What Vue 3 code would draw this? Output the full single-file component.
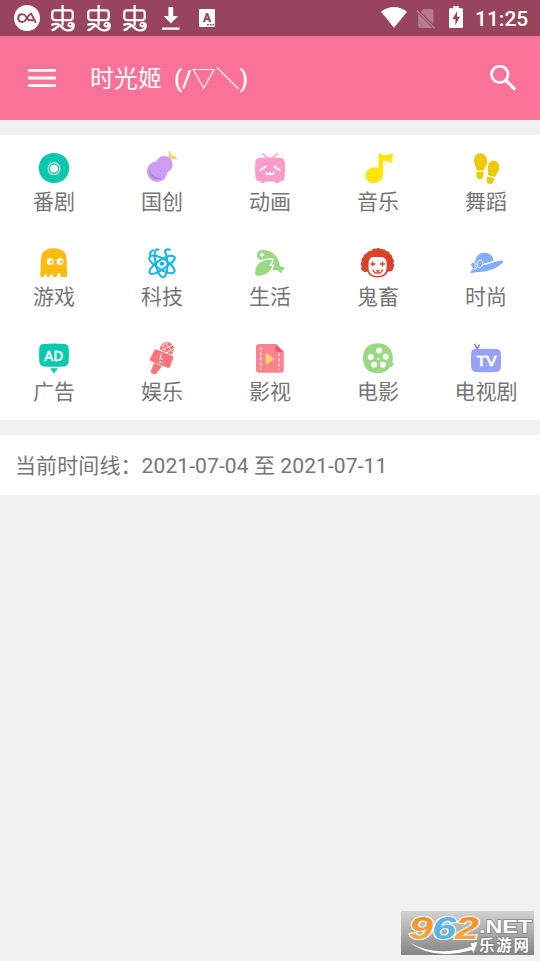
<script setup>
const categories = [
  { id: 'bangumi', label: '番剧' },
  { id: 'guochuang', label: '国创' },
  { id: 'anime', label: '动画' },
  { id: 'music', label: '音乐' },
  { id: 'dance', label: '舞蹈' },
  { id: 'game', label: '游戏' },
  { id: 'tech', label: '科技' },
  { id: 'life', label: '生活' },
  { id: 'kichiku', label: '鬼畜' },
  { id: 'fashion', label: '时尚' },
  { id: 'ad', label: '广告' },
  { id: 'ent', label: '娱乐' },
  { id: 'cinema', label: '影视' },
  { id: 'movie', label: '电影' },
  { id: 'tv', label: '电视剧' },
]
</script>

<template>
  <div class="screen">
    <div class="status">
      <svg class="st-logo" viewBox="0 0 26 26">
        <circle cx="13" cy="13" r="13" fill="#fff" />
        <path d="M21.5 17.2 17.2 8.6C15.5 9.2 13.5 12 11.8 14.7C9.6 18.4 4.2 17.4 4.2 13.1C4.2 8.7 9.5 7.8 12 11.5L14.7 15.2H20" fill="none" stroke="#97445c" stroke-width="1.9" stroke-linejoin="round" stroke-linecap="round" />
      </svg>
      <svg v-for="n in 3" :key="n" class="st-bug" viewBox="0 0 26 28">
        <g fill="none" stroke="#fff" stroke-width="2.3" stroke-linecap="round" stroke-linejoin="round">
          <rect x="2.3" y="6.3" width="20.4" height="9.8" rx="2.5" />
          <path d="M12.6 2V20.8M2.3 20.6C7 19.2 9 19.7 12 23.2C15 27.7 23.7 27.7 23.7 21.6C23.7 17.6 18.2 18.2 18.6 21.4M2.4 26C5 26 5.5 23.5 8.2 22.4" />
        </g>
        <circle cx="20.8" cy="21" r="2.6" fill="#fff" />
        <circle cx="20.2" cy="20.5" r=".9" fill="#97445c" />
      </svg>
      <svg class="st-down" viewBox="0 0 18 24" fill="#fff">
        <path d="M6.4 0h4.8v9h5L8.8 16.6 1.6 9h4.8zM0 20.5h17.6v2.3H0z" />
      </svg>
      <svg class="st-app" viewBox="0 0 16 18">
        <rect width="16" height="18" rx="1" fill="#fff" />
        <text x="8" y="12.8" text-anchor="middle" class="app-letter">A</text>
        <path d="M8 15h1.7v1.6H8zM10.8 15h1.7v1.6h-1.7zM13.5 15H15v1.6h-1.5z" fill="#97445c" />
      </svg>
      <span class="spacer"></span>
      <svg class="st-wifi" viewBox="0 0 26 21"><path d="M0 4.8C7.5-1.5 18.5-1.5 26 4.8L13 20.8z" fill="#fff" /></svg>
      <svg class="st-sim" viewBox="0 0 20 21">
        <path d="M7.4 1H15.4Q17.4 1 17.4 3V16.4L5 4.1zM2.2 5.6 16.4 20H4.2Q2.2 20 2.2 18z" fill="#b77b8e" />
        <path d="M.9 2.5 18.6 20.2" stroke="#b77b8e" stroke-width="1.5" />
      </svg>
      <svg class="st-bat" viewBox="0 0 14 22">
        <path d="M4 0h6v2.2h2.7q1.3 0 1.3 1.3v17.2Q14 22 12.7 22H1.3Q0 22 0 20.7V3.5Q0 2.2 1.3 2.2H4z" fill="#fff" />
        <path d="M8.3 5 3.4 13h3v6.2l4.5-8.4H8z" fill="#97445c" />
      </svg>
      <span class="clock">11:25</span>
    </div>

    <header class="appbar">
      <svg class="menu" viewBox="0 0 28 18" fill="#fff"><path d="M0 0h28v2.8H0zM0 7.6h28v2.8H0zM0 15.2h28V18H0z" /></svg>
      <h1 class="title">时光姬<span class="face">(/▽＼)</span></h1>
      <svg class="search" viewBox="0 0 27 27" fill="none" stroke="#fff" stroke-width="2.8">
        <circle cx="9.8" cy="9.4" r="8.2" /><path d="M16 15.5 25.2 24.7" stroke-width="3.2" />
      </svg>
    </header>

    <main class="content">
      <section class="grid">
        <div v-for="c in categories" :key="c.id" class="cell">
          <svg class="icon" viewBox="0 0 36 36">
            <g v-if="c.id === 'bangumi'">
              <path d="M18 3C27 3 33.2 9.4 33.2 18S27 33 18 33 2.8 26.6 2.8 18 9 3 18 3z" fill="#08c9ad" />
              <circle cx="18" cy="18.6" r="5.9" fill="none" stroke="#fff" stroke-width="1.1" />
              <circle cx="18" cy="18.6" r="3.9" fill="#fff" />
            </g>
            <g v-else-if="c.id === 'guochuang'">
              <path d="M22.5 8C26 6 24 3 24.5.8C27 1.5 27.3 4 27.2 5.6C30 5 32.5 6.5 33.5 9.4C30 9.6 27.5 8.7 26 10z" fill="#fbd27b" />
              <circle cx="20.2" cy="14.5" r="8.4" fill="#cf9bf3" />
              <circle cx="13.2" cy="21.6" r="10.3" fill="#cf9bf3" />
              <path d="M5.6 17.8C4 25 9 31.5 18.3 28C11 28.5 6.5 25 5.6 17.8z" fill="#a381e4" />
            </g>
            <g v-else-if="c.id === 'anime'" stroke-linecap="round" stroke-linejoin="round">
              <path d="M10.8 3.8 16.3 8.5M25.2 3.8 19.8 8.5" stroke="#fd9bcb" stroke-width="1.6" />
              <path d="M7 7.9Q18 7 29 7.9Q32.5 8.2 32.8 12Q33.4 20 32.6 27.5Q32.3 31 29 31.2L27.5 31.4 26.5 33H23.5L22.8 31.6H13L12.3 33H9.3L8.4 31.4 7 31.2Q3.8 31 3.4 27.5Q2.7 20 3.3 12Q3.5 8.2 7 7.9z" fill="#fd9bcb" />
              <path d="M8.5 20 13.6 16.6M22.6 16.6 27.5 20" stroke="#fff" stroke-width="2.1" />
              <path d="M13.9 22.2Q14.7 24.5 16.3 24.3Q17.7 24.2 18 22.6Q18.3 24.2 19.7 24.3Q21.3 24.4 22.1 22.2" fill="none" stroke="#fff" stroke-width="1.7" />
            </g>
            <g v-else-if="c.id === 'music'" fill="#fee504">
              <ellipse cx="14" cy="25.2" rx="9" ry="7.8" transform="rotate(-15 14 25.2)" />
              <path d="M18.4 4Q19 3 20.7 3.2C24 7 28.5 4.3 33 3.4Q33.6 4 32.4 7L32.3 12.2Q31 13.5 29.7 12C27 10.8 25 11 23.1 10.8L22.9 26H18.4z" />
            </g>
            <g v-else-if="c.id === 'dance'" fill="#edca09">
              <path d="M11.4 3.3C15.8 2.2 19.1 6.6 19.2 11.5C19.2 14.6 17.5 16.7 15.7 20.3L8.7 20.8C8.4 17.4 6.1 14.5 6 10.6C6 6.8 8 3.9 11.4 3.3z" />
              <path d="M8.5 22 15.4 21.4C16 25 15.4 28.9 12.1 29.2C9 29.4 7.4 25.3 8.5 22z" />
              <path d="M25.2 10.5C29 10.4 31.4 13.6 31 18.2C30.7 22 28.3 23.3 27.3 27L20 25.3C20.8 22 19.2 19.3 20 15.7C20.7 12.3 22.8 10.6 25.2 10.5z" />
              <path d="M19.5 26.5 26.4 28C26.2 32 24 34.5 21.3 34C18.4 33.3 17.9 29.7 19.5 26.5z" />
            </g>
            <g v-else-if="c.id === 'game'">
              <path d="M4.3 31L5 14Q5.4 3.2 17.7 3.2Q30 3.2 30.6 14L31.1 31Q31 32.3 29.5 32L25 32.1 23.9 28.2 22.3 28 20.2 32Q18.5 33 17.2 31.8L15.6 28.2 13.8 31.2Q12.4 33 10.9 31.2L9.8 28.6 7.6 31.7Q5 33 4.3 31z" fill="#febb0a" />
              <circle cx="14.2" cy="16.6" r="3.5" fill="#fff" /><circle cx="24" cy="16.6" r="3.5" fill="#fff" />
              <circle cx="15.4" cy="16.7" r="1.3" fill="#febb0a" /><circle cx="25.2" cy="16.7" r="1.3" fill="#febb0a" />
            </g>
            <g v-else-if="c.id === 'tech'" fill="none" stroke="#12b5e8" stroke-width="2" stroke-linecap="round">
              <path d="M14.5 4.8C10.8 2.5 9.5 9.5 12 20C14 29.5 18.2 35.5 21.3 30.5C24.5 24.5 24 11 20.7 6.7Q22 3.4 25.8 4.7" />
              <path d="M9.3 5.2Q5 7 6.3 10.5M5.4 12.5C7.3 9 15 10.5 22 15.4C29.5 20.5 33 27 28.8 28C24 29.2 14.5 24.2 8.5 18.5C5.8 15.9 4.5 14.2 5.4 12.5z" />
              <path d="M30.5 12C27.5 9.2 21 11.8 14.5 16.2C7.5 21 4 26.2 6.1 28.2C8.2 30.3 15 27.2 22 22C27 18.5 32 15.2 30.5 12z" />
              <circle cx="17.9" cy="18.6" r="2.2" fill="#12b5e8" stroke="none" />
            </g>
            <g v-else-if="c.id === 'life'">
              <path d="M5 9.2Q5.8 4.8 11.3 5Q22.5 5.8 26.6 15.6L28.1 21.3 33 22.4Q32 24.5 30.2 25.2L29.5 28.5 25.2 25.1Q19 25.7 16 23L8 14.7Q4.5 13.2 5 9.2z" fill="#98d982" />
              <path d="M3 31Q.8 22.5 7.4 17.1Q12.5 13.3 20.9 14.2Q21.3 16.5 18.2 20.3L21.5 20.1Q19 29.5 9 31.2Q5.2 31.8 3 31z" fill="#98d982" stroke="#fff" stroke-width="1.4" stroke-linejoin="round" />
              <path d="M10 7.4V12M7.7 9.7h4.6" stroke="#fff" stroke-width="1.4" />
            </g>
            <g v-else-if="c.id === 'kichiku'">
              <path d="M2.6 25.5Q0 24 1.8 21.5Q-.3 19 1.8 16.5Q.7 13.5 3.5 12Q3.5 8.8 6.8 8.2Q7.8 5.2 11.3 5.7Q13.2 2.7 16 4Q18.8 2 21 4.2Q24.7 3.2 26 6Q29.5 6 29.8 9Q32.8 10.2 32.5 13.2Q35 15 33.2 18Q35.2 20.4 33.2 22.7Q33.5 25.6 31 26.2L27.8 26.8Q25.5 32.7 17.5 32.5Q9.5 32.3 7.5 26.8L3.9 27z" fill="#d8432b" />
              <path d="M13 12H22Q26.8 12.5 26.7 19.5Q27 29.3 21.5 30.6Q17.5 31.6 13.3 30.5Q8.2 29 8.5 21Q8 12.5 13 12z" fill="#fff" />
              <path d="M12.8 16.5V21.5M10.3 19h5M22.4 16.5V21.5M20 19h5M12.7 24.5Q14 28.4 17.7 28.2Q21.5 28.2 22.6 24.5M16.4 25 17.8 26.8 19.2 25" fill="none" stroke="#d8432b" stroke-width="1.3" />
            </g>
            <g v-else-if="c.id === 'fashion'">
              <path d="M7 19C7 11 11.5 7.2 17 7.7C21.8 7.5 25.5 11.5 25.3 16L11 20z" fill="#82aefb" />
              <path d="M2 27.5Q4.5 22.5 12 20.5Q24 17.2 32.8 15.6Q36.5 15.4 34.2 18.3Q28 24.3 17 26.5Q10.5 27 6 27.5Q3 28.5 2 27.5z" fill="#82aefb" />
              <path d="M8.5 20.2Q18 20 27 15.9" stroke="#fff" stroke-width="1.1" fill="none" />
              <g fill="#82aefb" stroke="#fff" stroke-width=".8"><ellipse cx="5.9" cy="20.7" rx="2.7" ry="3.7" transform="rotate(-30 5.9 20.7)" /><ellipse cx="11.8" cy="18.8" rx="2.8" ry="3.9" transform="rotate(18 11.8 18.8)" /><circle cx="8.4" cy="20.5" r="1.4" /></g>
            </g>
            <g v-else-if="c.id === 'ad'">
              <path d="M7.5 4Q18 3 28.5 4Q32.2 4.3 32.7 8Q33.3 15 32.6 22Q32 26 28 26.4Q18 27.3 8 26.4Q4 26 3.4 22Q2.7 15 3.3 8Q3.8 4.3 7.5 4z" fill="#08c9ad" />
              <path d="M14.7 28.2H21.3Q21.3 31 19.7 31.3L18 33.4 16.3 31.3Q14.7 31 14.7 28.2z" fill="#08c9ad" />
              <text x="8.2" y="20.8" textLength="19" lengthAdjust="spacingAndGlyphs" class="icon-text ad-text">AD</text>
            </g>
            <g v-else-if="c.id === 'ent'" fill="#fb7477">
              <circle cx="23" cy="9.1" r="7" />
              <path d="M18 5.5 25 15M21 3 28.7 12M16.8 9.5 21 15M29 4.5 18 10M30 8.5 20.5 14M24 2.5 18 6" stroke="#fff" stroke-width=".75" />
              <path d="M10.8 21.4 19 24.7 12.9 33Q11.2 35.2 8.6 33.8Q6 32.5 7 30.2z" />
              <path d="M10 10.4Q10.8 8.3 12.8 9.2L28.2 15.4Q30.2 16.3 29.5 18.3L26.4 26.8Q25.6 28.8 23.5 28L7.2 21.6Q4.8 20.6 5.7 18.5z" stroke="#fff" stroke-width=".7" />
              <path d="M17.8 13.4 15.8 19.5M15.3 21.4 17.2 22.5M16.2 18.5Q18 17.8 18.3 20.2M15 22 19 22.8" stroke="#fff" stroke-width="1" fill="none" />
            </g>
            <g v-else-if="c.id === 'cinema'">
              <path d="M7 4.1H23.8L31.8 12V29.4Q31.8 32.7 28.5 32.7H7.3Q4 32.7 4 29.4V7.2Q4 4.1 7 4.1z" fill="#fd828e" />
              <path d="M23.8 4.1 31.8 12H26.2Q23.8 12 23.8 9.6z" fill="#f4546b" />
              <path d="M13.7 14Q13.8 12.9 15 13.4L21.5 18Q22.4 18.8 21.5 19.6L15 24.3Q13.8 24.8 13.7 23.6z" fill="#fed269" />
              <path d="M8.7 7.4V29.6M27.1 13.4V29.6" stroke="#fff" stroke-width="1.5" stroke-dasharray="2.8 2.3" opacity=".85" />
            </g>
            <g v-else-if="c.id === 'movie'">
              <path d="M17.7 3.2C27.5 3.2 32.9 9.4 32.8 18.2Q32.8 20.5 32.1 22.7Q34.7 22.7 33.3 25Q32 26.8 29.7 27.2Q26 33.2 17.7 33.2C8.4 33.2 3 27.5 3 18.2C3 8.8 8.4 3.2 17.7 3.2z" fill="#98d982" />
              <g fill="#fff"><circle cx="19.2" cy="10.4" r="3" /><circle cx="10.8" cy="17" r="3" /><circle cx="25.6" cy="16.7" r="3" /><circle cx="14.1" cy="24.7" r="3" /><circle cx="22.9" cy="24.7" r="3" /><circle cx="18.4" cy="19" r="1.1" /></g>
            </g>
            <g v-else>
              <path d="M6.8 4.3 9.3 9M11.3 5.2 9.2 9" fill="none" stroke="#7380ca" stroke-width="1.4" stroke-linecap="round" />
              <path d="M7.5 9.1Q18 8.5 28.5 9.1Q32.4 9.3 32.8 13Q33.3 20.5 32.8 27.5Q32.4 31.5 28.5 31.9Q18 32.5 7.5 31.9Q3.6 31.5 3.2 27.5Q2.7 20.5 3.2 13Q3.6 9.3 7.5 9.1z" fill="#97a2f6" />
              <text x="8.5" y="26" textLength="20" lengthAdjust="spacingAndGlyphs" class="icon-text tv-text">TV</text>
            </g>
          </svg>
          <span class="label">{{ c.label }}</span>
        </div>
      </section>
      <section class="timeline">当前时间线：2021-07-04 至 2021-07-11</section>
    </main>

    <div class="watermark">
      <svg viewBox="0 0 133 44">
        <defs>
          <linearGradient id="wm-orange" x1="0" y1="0" x2="0" y2="1"><stop offset="0" stop-color="#f58a24" /><stop offset="1" stop-color="#f9ae45" /></linearGradient>
        </defs>
        <path d="M8 31Q34 47 71 35.5L69.5 32.5 76.5 31 72.5 42 71 39Q32 50 8 31z" fill="#fff" />
        <g class="wm-num">
          <text x="8" y="28.3" textLength="24" lengthAdjust="spacingAndGlyphs" fill="url(#wm-orange)">9</text>
          <text x="31" y="28.3" textLength="24" lengthAdjust="spacingAndGlyphs" fill="#58b5e9">6</text>
          <text x="54" y="28.3" textLength="24" lengthAdjust="spacingAndGlyphs" fill="url(#wm-orange)">2</text>
        </g>
        <text x="78" y="21.5" textLength="53" lengthAdjust="spacingAndGlyphs" class="wm-net">.NET</text>
        <text x="78" y="39.5" textLength="50" class="wm-cn">乐游网</text>
      </svg>
    </div>
  </div>
</template>

<style>
body { background: #f1f1f1; }
</style>

<style scoped>
.screen { position: relative; min-height: 961px; background: #f1f1f1; font-family: Roboto, "Noto Sans CJK SC", sans-serif; color: #757575; }
svg { display: block; flex: none; }
.status { height: 36px; box-sizing: border-box; padding: 0 12px 0 14px; display: flex; align-items: center; background: #97445c; }
.st-logo { width: 26px; height: 26px; margin-right: 10px; }
.st-bug { width: 26px; height: 28px; margin-right: 10px; }
.st-down { width: 18px; height: 24px; margin: 2px 0 0 4px; }
.st-app { width: 16px; height: 18px; margin-left: 19px; }
.app-letter { font: 900 12px Roboto, sans-serif; fill: #97445c; }
.spacer { flex: 1; }
.st-wifi { width: 26px; height: 21px; margin: 0 9px 2px 0; }
.st-sim { width: 20px; height: 21px; margin-right: 13px; }
.st-bat { width: 14px; height: 22px; margin: 0 12px 2px 0; }
.clock { color: #fff; font-size: 21px; font-weight: 500; line-height: 36px; width: 53px; padding-top: 2px; white-space: nowrap; text-align: right; }
.appbar { height: 84px; box-sizing: border-box; padding: 0 23px 0 28px; display: flex; align-items: center; background: #fb7299; color: #fff; }
.menu { width: 28px; height: 18px; }
.title { flex: 1; margin: 2px 0 0 34px; font-size: 24px; line-height: 36px; font-weight: 400; white-space: nowrap; }
.face { margin-left: 12px; font-weight: 500; }
.search { width: 27px; height: 27px; }
.content { display: flex; flex-direction: column; gap: 15px; padding-top: 15px; }
.grid { display: grid; grid-template-columns: repeat(5, 1fr); grid-auto-rows: 95px; background: #fff; }
.cell { display: flex; flex-direction: column; align-items: center; padding-top: 15px; }
.icon { width: 36px; height: 36px; }
.label { margin-top: 1px; font-size: 21px; line-height: 30px; }
.icon-text { fill: #fff; }
.ad-text { font: 500 15px "Noto Sans", sans-serif; stroke: #fff; stroke-width: .4px; }
.tv-text { font: 500 14px "Noto Sans", sans-serif; stroke: #fff; stroke-width: .4px; }
.timeline { box-sizing: border-box; height: 59.5px; line-height: 61px; padding: 1px 0 0 15px; background: #fff; font-size: 21px; letter-spacing: .1px; white-space: nowrap; }
.watermark { position: absolute; left: 401px; top: 911px; width: 133px; height: 44px; background: linear-gradient(#d2d2d2, #858585); }
.watermark svg { width: 133px; height: 44px; overflow: visible; }
.wm-num { font: italic 700 31px "Liberation Sans", sans-serif; paint-order: stroke; stroke: #fff; stroke-width: 2px; }
.wm-net { font: 700 19px "Liberation Sans", sans-serif; fill: #fff; paint-order: stroke; stroke: #888; stroke-width: 1.5px; }
.wm-cn { font: 700 15.5px "Liberation Sans", "Noto Sans CJK SC", sans-serif; fill: #fff; paint-order: stroke; stroke: #777; stroke-width: 1.5px; }
</style>
